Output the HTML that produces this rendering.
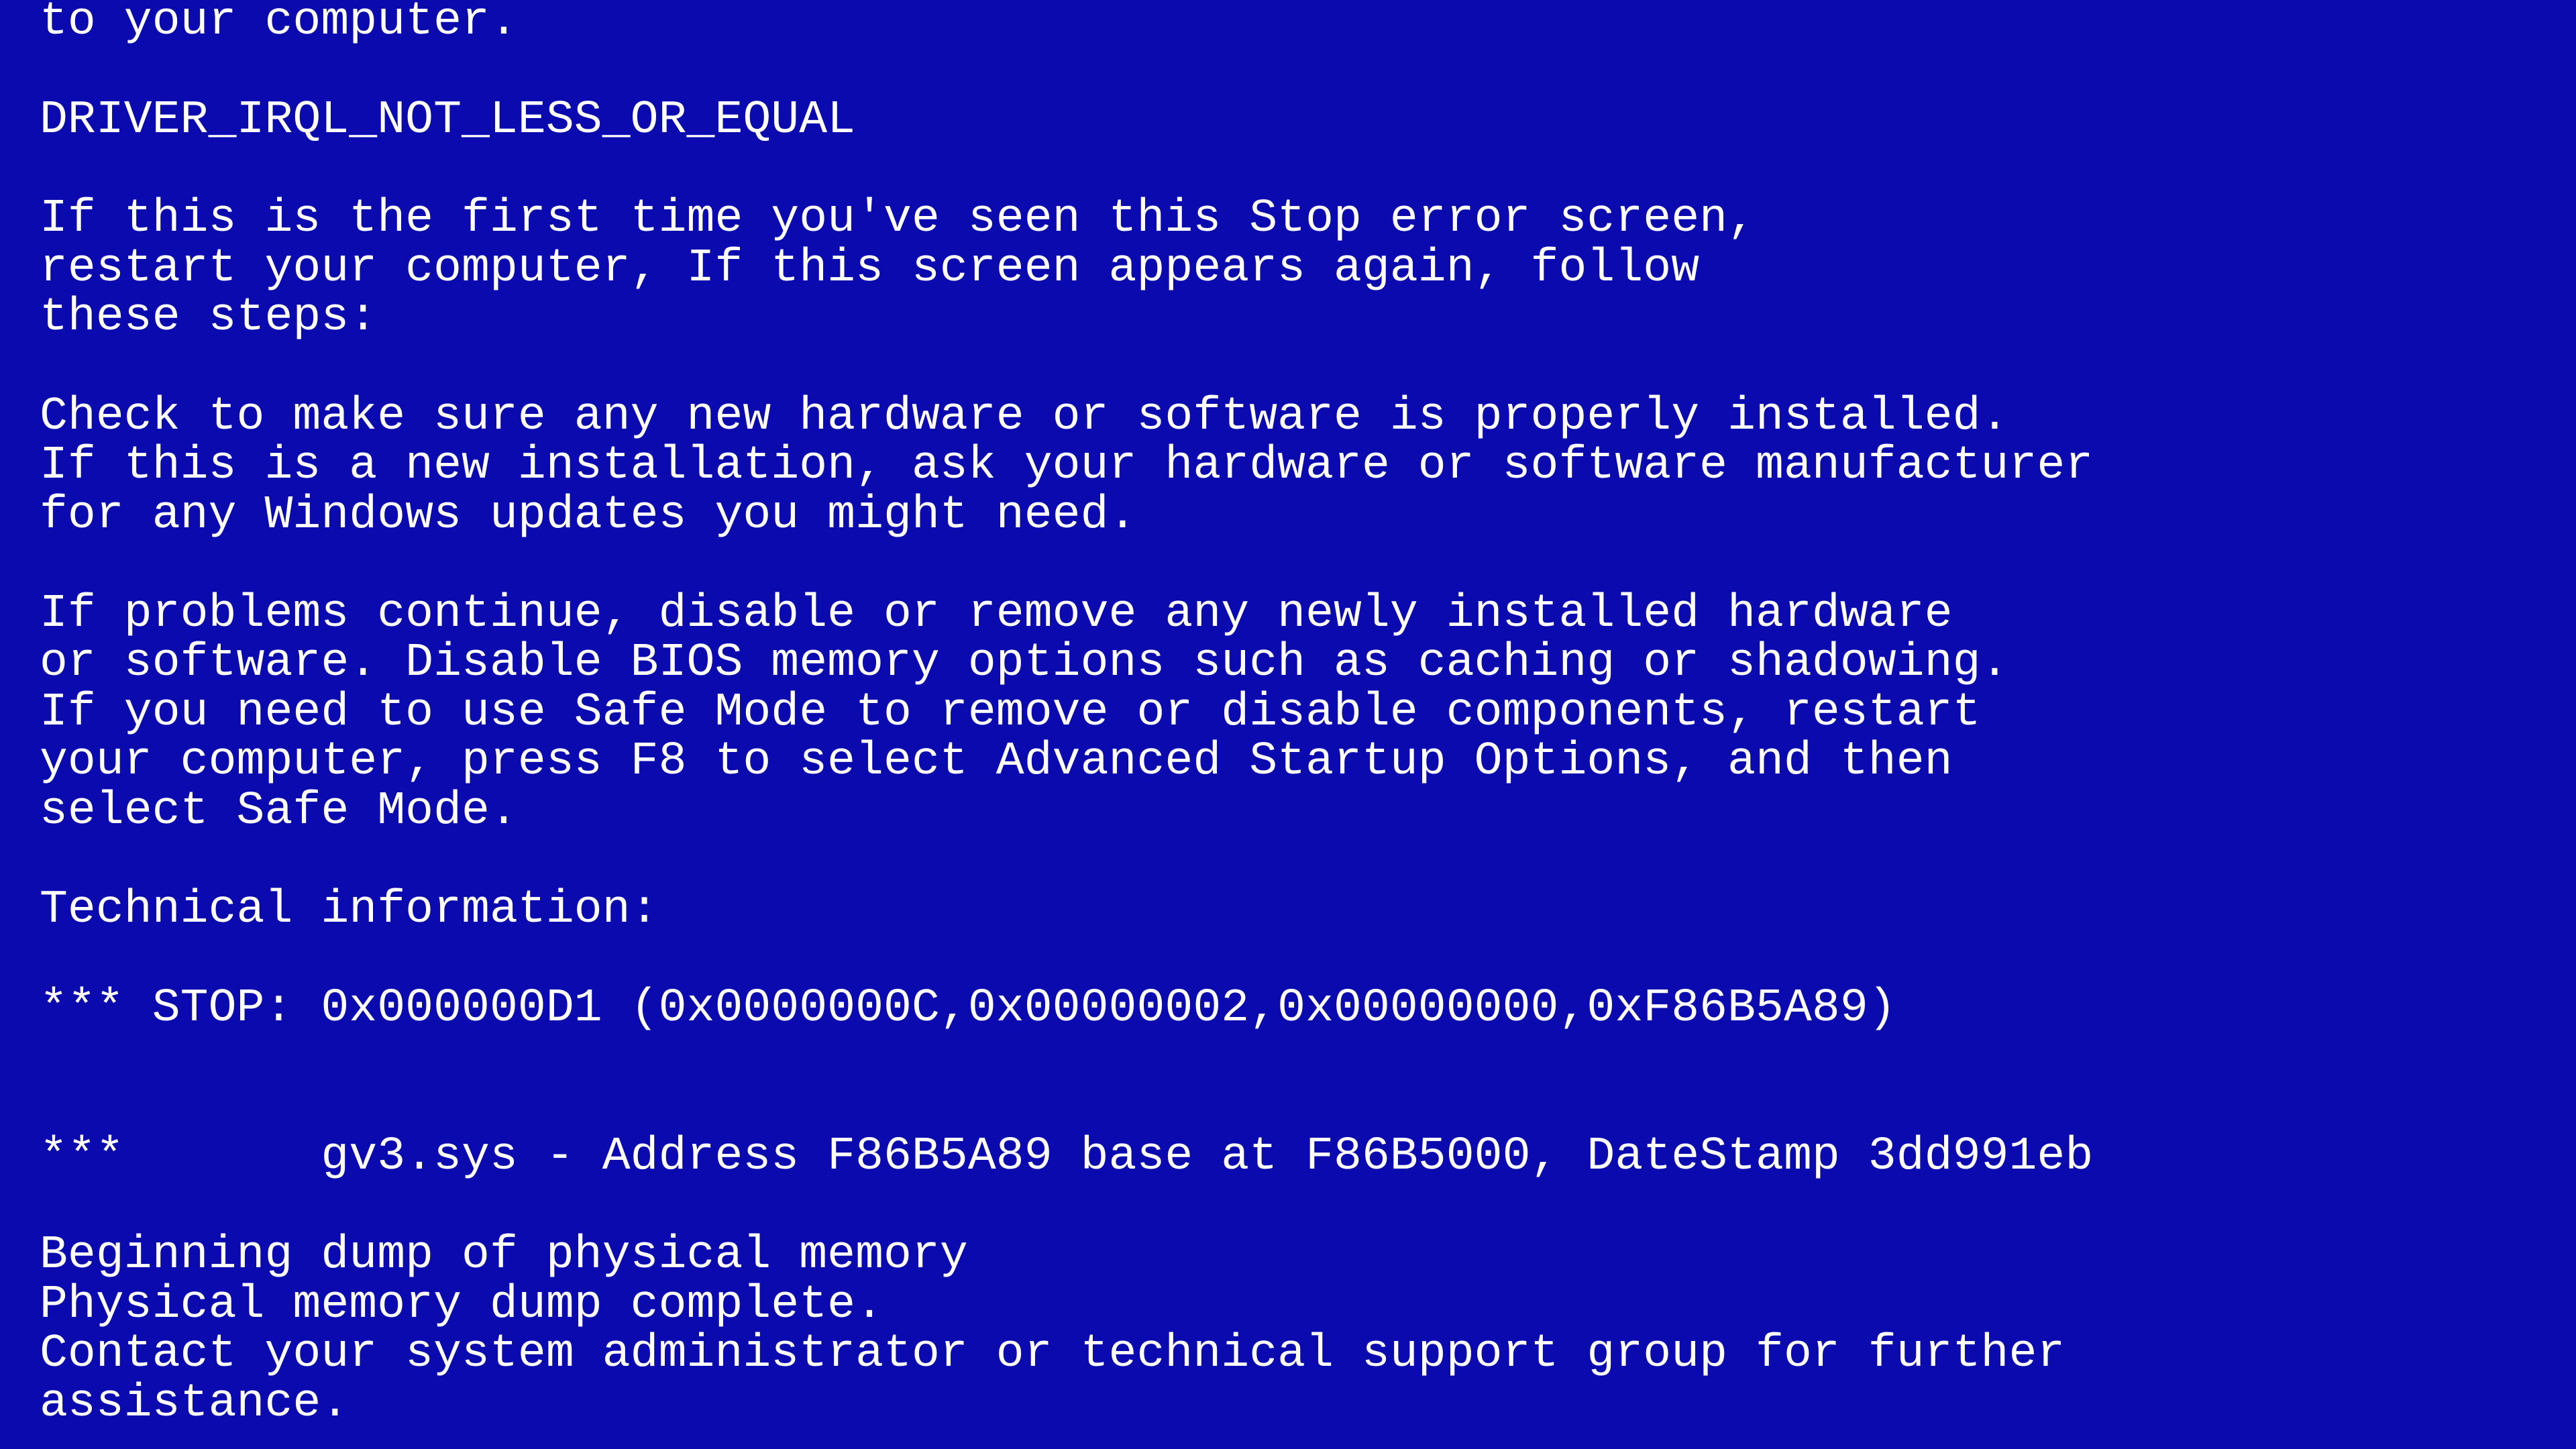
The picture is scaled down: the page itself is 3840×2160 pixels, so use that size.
<!DOCTYPE html>
<html><head><meta charset="utf-8"><style>
html,body{margin:0;padding:0;width:3840px;height:2160px;overflow:hidden;background:#0A0AAE;}
pre{position:absolute;left:59px;top:-5px;margin:0;color:#fff;font-family:"Liberation Mono","DejaVu Sans Mono",monospace;font-size:69.8px;line-height:73.57px;letter-spacing:0.05px;}
</style></head><body><pre>to your computer.

DRIVER_IRQL_NOT_LESS_OR_EQUAL

If this is the first time you've seen this Stop error screen,
restart your computer, If this screen appears again, follow
these steps:

Check to make sure any new hardware or software is properly installed.
If this is a new installation, ask your hardware or software manufacturer
for any Windows updates you might need.

If problems continue, disable or remove any newly installed hardware
or software. Disable BIOS memory options such as caching or shadowing.
If you need to use Safe Mode to remove or disable components, restart
your computer, press F8 to select Advanced Startup Options, and then
select Safe Mode.

Technical information:

*** STOP: 0x000000D1 (0x0000000C,0x00000002,0x00000000,0xF86B5A89)


***       gv3.sys - Address F86B5A89 base at F86B5000, DateStamp 3dd991eb

Beginning dump of physical memory
Physical memory dump complete.
Contact your system administrator or technical support group for further
assistance.
</pre></body></html>
